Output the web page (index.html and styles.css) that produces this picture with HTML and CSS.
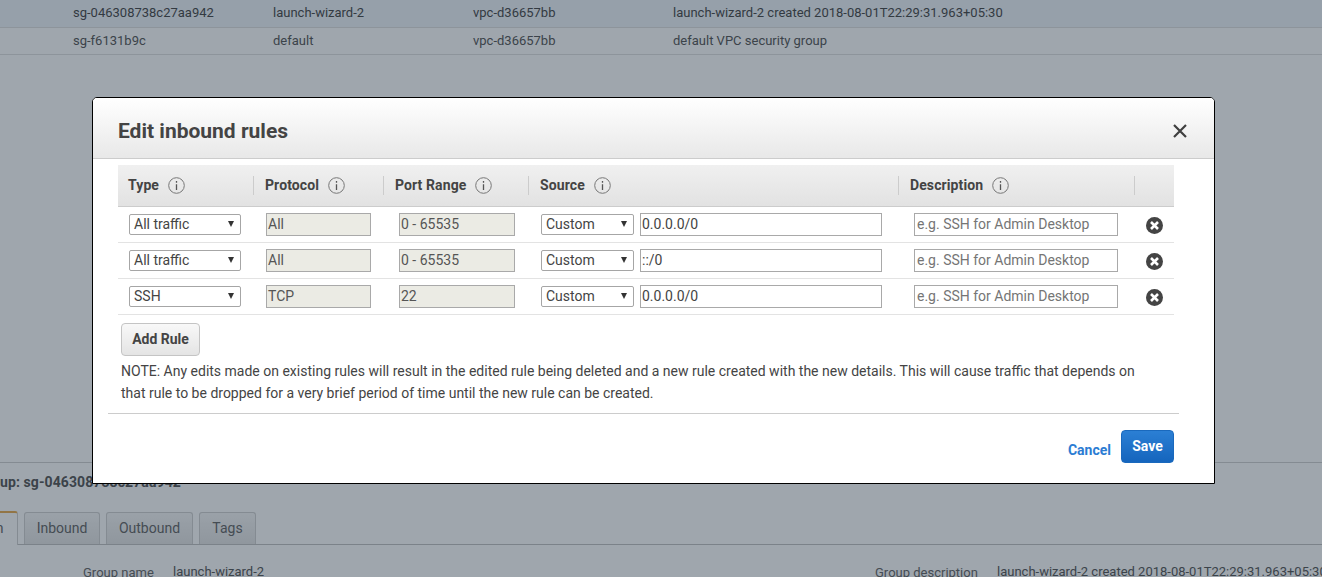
FILE: index.html
```html
<!DOCTYPE html>
<html lang="en">
<head>
<meta charset="utf-8">
<title>Edit inbound rules</title>
<link rel="stylesheet" href="styles.css">
</head>
<body>
<main class="page">
  <div class="sg-table">
    <div class="sg-row sg-selected"><span>sg-046308738c27aa942</span><span>launch-wizard-2</span><span>vpc-d36657bb</span><span>launch-wizard-2 created 2018-08-01T22:29:31.963+05:30</span></div>
    <div class="sg-row"><span>sg-f6131b9c</span><span>default</span><span>vpc-d36657bb</span><span>default VPC security group</span></div>
  </div>
  <div class="detail">
    <div class="detail-title">Security Group: sg-046308738c27aa942</div>
    <div class="tabs">
      <div class="tab tab-active">Description</div>
      <div class="tab tab-inbound">Inbound</div>
      <div class="tab tab-outbound">Outbound</div>
      <div class="tab tab-tags">Tags</div>
    </div>
    <div class="fields">
      <span class="field-label">Group name</span><span class="field-value">launch-wizard-2</span>
      <span class="field-label">Group description</span><span class="field-value">launch-wizard-2 created 2018-08-01T22:29:31.963+05:30</span>
    </div>
  </div>
</main>

<div class="overlay"></div>

<section class="modal">
  <header class="modal-head">
    <h1>Edit inbound rules</h1>
    <svg class="close" viewBox="0 0 14 14" width="14" height="14"><path d="M1 1 13 13M13 1 1 13" stroke="#3f3f3f" stroke-width="2.2" fill="none"/></svg>
  </header>
  <div class="modal-body">
    <div class="grid grid-head">
      <div class="th">Type <svg class="info" viewBox="0 0 17 17"><circle cx="8.5" cy="8.5" r="7.8" fill="none" stroke="#777"/><path d="M8.5 4v1.8M8.5 7.2v5.8" stroke="#555" stroke-width="1.3"/></svg></div>
      <div class="th">Protocol <svg class="info" viewBox="0 0 17 17"><circle cx="8.5" cy="8.5" r="7.8" fill="none" stroke="#777"/><path d="M8.5 4v1.8M8.5 7.2v5.8" stroke="#555" stroke-width="1.3"/></svg></div>
      <div class="th">Port Range <svg class="info" viewBox="0 0 17 17"><circle cx="8.5" cy="8.5" r="7.8" fill="none" stroke="#777"/><path d="M8.5 4v1.8M8.5 7.2v5.8" stroke="#555" stroke-width="1.3"/></svg></div>
      <div class="th">Source <svg class="info" viewBox="0 0 17 17"><circle cx="8.5" cy="8.5" r="7.8" fill="none" stroke="#777"/><path d="M8.5 4v1.8M8.5 7.2v5.8" stroke="#555" stroke-width="1.3"/></svg></div>
      <div class="th">Description <svg class="info" viewBox="0 0 17 17"><circle cx="8.5" cy="8.5" r="7.8" fill="none" stroke="#777"/><path d="M8.5 4v1.8M8.5 7.2v5.8" stroke="#555" stroke-width="1.3"/></svg></div>
      <div class="th th-empty"></div>
    </div>

    <div class="grid grid-row">
      <div class="cell"><div class="select select-type">All traffic<i class="arrow"></i></div></div>
      <div class="cell"><div class="input ro w-proto">All</div></div>
      <div class="cell cell-port"><div class="input ro w-port">0 - 65535</div></div>
      <div class="cell cell-source"><div class="select select-source">Custom<i class="arrow"></i></div><div class="input w-cidr">0.0.0.0/0</div></div>
      <div class="cell cell-desc"><div class="input w-desc ph">e.g. SSH for Admin Desktop</div></div>
      <div class="cell cell-x"><svg class="remove" viewBox="0 0 17 17"><circle cx="8.5" cy="8.5" r="8.5" fill="#444"/><path d="M5 5 12 12M12 5 5 12" stroke="#fff" stroke-width="2.6"/></svg></div>
    </div>
    <div class="grid grid-row">
      <div class="cell"><div class="select select-type">All traffic<i class="arrow"></i></div></div>
      <div class="cell"><div class="input ro w-proto">All</div></div>
      <div class="cell cell-port"><div class="input ro w-port">0 - 65535</div></div>
      <div class="cell cell-source"><div class="select select-source">Custom<i class="arrow"></i></div><div class="input w-cidr">::/0</div></div>
      <div class="cell cell-desc"><div class="input w-desc ph">e.g. SSH for Admin Desktop</div></div>
      <div class="cell cell-x"><svg class="remove" viewBox="0 0 17 17"><circle cx="8.5" cy="8.5" r="8.5" fill="#444"/><path d="M5 5 12 12M12 5 5 12" stroke="#fff" stroke-width="2.6"/></svg></div>
    </div>
    <div class="grid grid-row">
      <div class="cell"><div class="select select-type">SSH<i class="arrow"></i></div></div>
      <div class="cell"><div class="input ro w-proto">TCP</div></div>
      <div class="cell cell-port"><div class="input ro w-port">22</div></div>
      <div class="cell cell-source"><div class="select select-source">Custom<i class="arrow"></i></div><div class="input w-cidr">0.0.0.0/0</div></div>
      <div class="cell cell-desc"><div class="input w-desc ph">e.g. SSH for Admin Desktop</div></div>
      <div class="cell cell-x"><svg class="remove" viewBox="0 0 17 17"><circle cx="8.5" cy="8.5" r="8.5" fill="#444"/><path d="M5 5 12 12M12 5 5 12" stroke="#fff" stroke-width="2.6"/></svg></div>
    </div>

    <button class="add-rule" type="button">Add Rule</button>
    <p class="note">NOTE: Any edits made on existing rules will result in the edited rule being deleted and a new rule created with the new details. This will cause traffic that depends on that rule to be dropped for a very brief period of time until the new rule can be created.</p>
  </div>
  <div class="modal-foot">
    <a class="cancel">Cancel</a>
    <button class="save" type="button">Save</button>
  </div>
</section>
</body>
</html>
```
FILE: styles.css
```css
* { box-sizing: border-box; }
html, body { margin: 0; height: 100%; overflow: hidden; }
body { font-family: Roboto, "Liberation Sans", sans-serif; font-size: 14px; color: #444; background: #fff; }

.page { height: 577px; display: flex; flex-direction: column; justify-content: space-between; overflow: hidden; }

.sg-row { display: grid; grid-template-columns: 200px 200px 200px 1fr; padding: 0 0 1px 73px; height: 27px; align-items: center; border-bottom: 1px solid #ddd; background: #fff; color: #444; font-size: 13px; }
.sg-selected { background: #eef3fa; height: 28px; padding-bottom: 2px; color: #333; }

.detail { height: 115px; border-top: 1px solid #ccc; overflow: hidden; }
.detail-title { font-weight: 700; letter-spacing: .1px; margin: 11px 0 0 -79px; height: 17px; line-height: 17px; white-space: nowrap; }
.tabs { display: flex; align-items: flex-end; gap: 6px; margin: 21px 0 0 -82px; height: 33px; border-bottom: 1px solid #bbb; }
.tab { flex: none; height: 32px; line-height: 31px; text-align: center; border: 1px solid #ccc; border-bottom: 0; border-radius: 3px 3px 0 0; background: linear-gradient(#f6f6f6, #e2e2e2); color: #555; }
.tab-active { position: relative; width: 100px; height: 34px; margin-bottom: -1px; background: #fff; border-top: 2px solid #e7a33e; }
.tab-inbound { width: 76px; }
.tab-outbound { width: 87px; }
.tab-tags { width: 57px; }
.fields { display: grid; grid-template-columns: 90px 702px 122px auto; align-items: center; height: 32px; padding: 18px 0 0 83px; font-size: 13px; white-space: nowrap; }
.field-label { color: #555; margin-top: 2px; }

.overlay { position: fixed; inset: 0; background: rgba(52, 66, 80, .47); }

.modal { position: absolute; left: 92px; top: 97px; width: 1123px; height: 387px; background: #fff; border: 1px solid #000; border-radius: 5px 5px 0 0; display: flex; flex-direction: column; }
.modal-head { height: 61px; flex: none; display: flex; align-items: center; justify-content: space-between; padding: 0 27.5px 0 25px; background: linear-gradient(#fff, #e8e8e8); border-bottom: 1px solid #ccc; border-radius: 4px 4px 0 0; }
.modal-head h1 { margin: 6px 0 0; font-size: 21px; font-weight: 700; line-height: 24px; color: #444; }
.close { margin-top: 6px; }

.modal-body { flex: 1; padding: 6px 40px 0 25px; }
.grid { display: grid; grid-template-columns: 136px 130px 145px 370px 236px 39px; }
.grid-head { height: 42px; background: linear-gradient(#f0f0f0, #e2e2e2); border-bottom: 1px solid #ccc; align-items: center; }
.th { height: 19px; padding: 0 0 2px 11px; display: flex; align-items: center; gap: 9px; font-weight: 700; letter-spacing: .1px; color: #444; border-right: 1px solid #ccc; white-space: nowrap; }
.th:first-child { padding-left: 10px; }
.th-empty { border-right: 0; }
.info { width: 17px; height: 17px; flex: none; margin-top: 2px; }

.grid-row { height: 36px; border-bottom: 1px solid #e3e3e3; align-items: center; }
.cell { display: flex; align-items: center; padding-left: 12px; height: 35px; }
.cell:first-child { padding-left: 11px; }
.cell-port { padding-left: 15px; }
.cell-source { gap: 6px; }
.cell-desc { padding-left: 15px; }
.cell-x { padding: 2px 0 0 11px; }

.select { position: relative; height: 21px; line-height: 19px; padding-left: 4px; background: #fff; border: 1px solid #a6a6a6; border-radius: 2px; color: #444; white-space: nowrap; }
.select-type { width: 112px; }
.select-source { width: 93px; }
.arrow { position: absolute; right: 6px; top: 6px; width: 0; height: 0; border-left: 3px solid transparent; border-right: 3px solid transparent; border-top: 6px solid #333; }

.input { height: 23px; line-height: 21px; padding-left: 1px; border: 1px solid #a9a9a9; background: #fff; color: #444; white-space: nowrap; }
.ro { background: #ebebe4; color: #555; }
.w-proto { width: 105px; }
.w-port { width: 116px; }
.w-cidr { width: 242px; }
.w-desc { width: 204px; }
.ph { color: #757575; padding-left: 2px; }

.remove { width: 17px; height: 17px; }

.add-rule { display: block; margin: 8px 0 0 3px; width: 79px; height: 33px; padding: 0 0 2px; font: 700 14px Roboto, "Liberation Sans", sans-serif; color: #444; background: linear-gradient(#f8f8f8, #e4e4e4); border: 1px solid #c4c4c4; border-radius: 4px; }
.note { margin: 4px 0 0 3px; line-height: 22px; color: #444; width: 1030px; }

.modal-foot { height: 70px; flex: none; margin: 0 35px 0 15px; border-top: 1px solid #ccc; display: flex; justify-content: flex-end; align-items: flex-start; padding: 16px 5px 0 0; gap: 10px; }
.cancel { font-weight: 700; color: #2b7cd3; margin-top: 12px; line-height: 17px; }
.save { width: 53px; height: 33px; padding: 0 0 1px; font: 700 14px Roboto, "Liberation Sans", sans-serif; color: #fff; background: linear-gradient(#2b7fd4, #1565bd); border: 1px solid #1a69bd; border-radius: 4px; }
```
